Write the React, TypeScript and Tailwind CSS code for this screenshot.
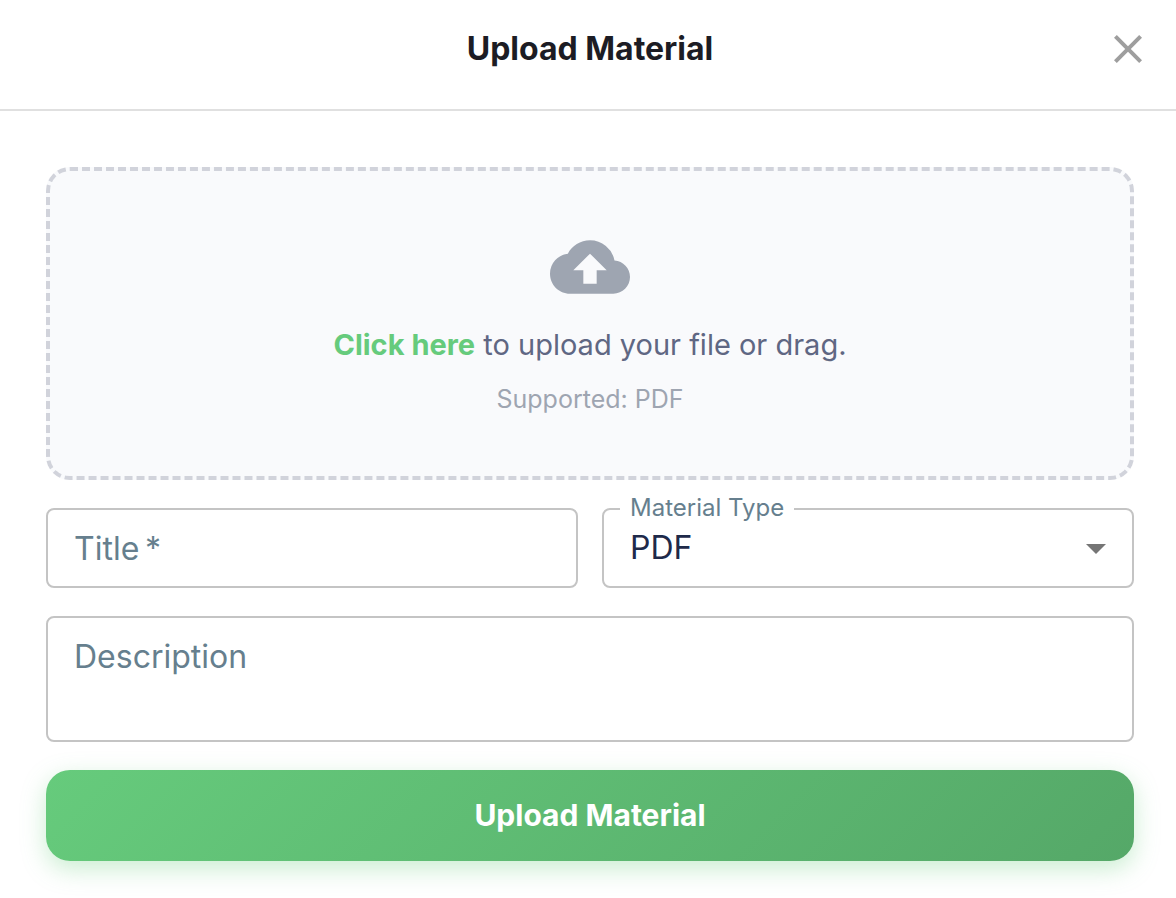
import { MdArrowDropDown, MdClose, MdCloudUpload } from "react-icons/md";

function DialogHeader() {
  return (
    <header className="grid grid-cols-[1fr_auto_1fr] items-center border-b-2 border-[#e0e0e0] pt-5 pr-6 pb-8 pl-7">
      <h1 className="col-start-2 text-[32px] leading-[57px] font-bold text-[#1c1c24]">Upload Material</h1>
      <button type="button" aria-label="Close" className="justify-self-end text-[#9e9e9e]">
        <MdClose size={48} />
      </button>
    </header>
  );
}

function Dropzone() {
  return (
    <label className="flex cursor-pointer flex-col items-center rounded-3xl border-4 border-dashed border-[#d1d3db] bg-[#f9fafc] py-14">
      <input type="file" accept="application/pdf" className="sr-only" />
      <MdCloudUpload size={80} className="text-[#9ea5b1]" />
      <span className="mt-4 text-[29px] leading-[43px] text-[#5f6783]">
        <strong className="font-bold text-[#66cb7c]">Click here</strong> to upload your file or drag.
      </span>
      <span className="mt-3 text-[25px] leading-[42px] text-[#9ea5b1]">Supported: PDF</span>
    </label>
  );
}

export default function App() {
  return (
    <main className="min-h-screen bg-white font-['Inter',sans-serif]">
      <DialogHeader />
      <form className="flex flex-col gap-7 pt-14 pr-[42px] pb-9 pl-[46px]">
        <Dropzone />
        <div className="grid grid-cols-2 gap-6">
          <div className="relative">
            <input
              id="title"
              required
              placeholder=" "
              className="peer h-20 w-full rounded-lg border-2 border-[#c4c4c4] px-[26px] text-[32px] text-[#1e2a4a] shadow-none outline-none"
            />
            <label
              htmlFor="title"
              className="pointer-events-none absolute top-4 left-7 hidden text-[32px] leading-[50px] text-[#667f8e] peer-placeholder-shown:block"
            >
              Title{"\u2009"}*
            </label>
          </div>
          <div className="relative">
            <select
              id="material-type"
              className="h-20 w-full appearance-none rounded-lg border-2 border-[#c4c4c4] bg-white px-[26px] text-[32px] text-[#1e2a4a] outline-none"
            >
              <option>PDF</option>
            </select>
            <label
              htmlFor="material-type"
              className="absolute -top-4 left-[18px] bg-white px-[10px] text-2xl leading-8 text-[#667f8e]"
            >
              Material Type
            </label>
            <MdArrowDropDown size={48} className="pointer-events-none absolute top-4 right-[14px] text-[#757575]" />
          </div>
        </div>
        <div className="relative flex">
          <textarea
            id="description"
            placeholder=" "
            className="peer h-[126px] w-full resize-none rounded-lg border-2 border-[#c4c4c4] px-[26px] py-[14px] text-[32px] leading-[50px] text-[#1e2a4a] outline-none"
          />
          <label
            htmlFor="description"
            className="pointer-events-none absolute top-4 left-7 hidden text-[32px] leading-[50px] text-[#667f8e] peer-placeholder-shown:block"
          >
            Description
          </label>
        </div>
        <button
          type="submit"
          className="rounded-3xl bg-[linear-gradient(135deg,#66cb7c,#55a868)] py-5 text-[30px] leading-[51px] font-bold text-white shadow-[0_8px_24px_rgba(102,204,124,0.35)]"
        >
          Upload Material
        </button>
      </form>
    </main>
  );
}
